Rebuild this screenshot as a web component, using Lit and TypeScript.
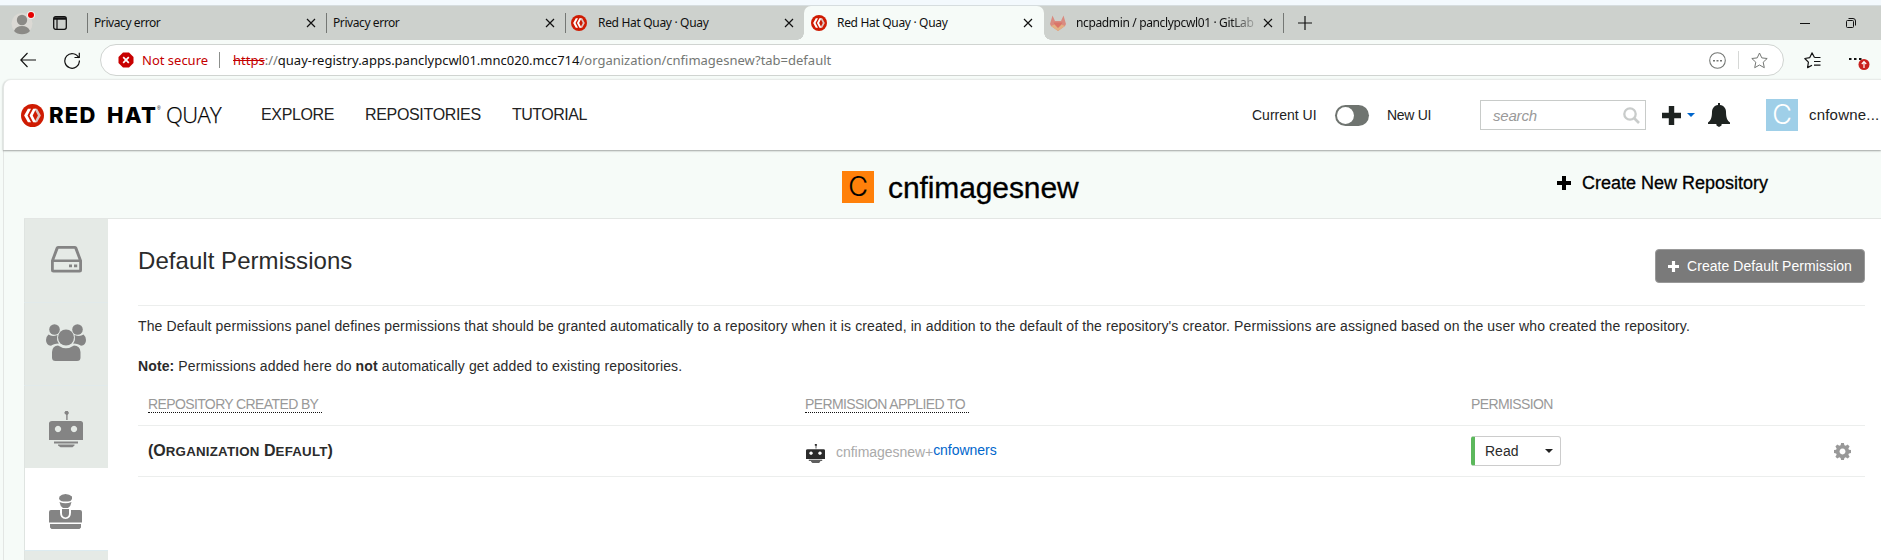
import { LitElement, html, css, svg } from "lit";
import { customElement } from "lit/decorators.js";

const quayMark = (size: number) => html`<svg width=${size} height=${size} viewBox="0 0 22 22">
  <circle cx="11" cy="11" r="11" fill="#cf1b02" />
  <path d="M12.800 4.500h2.600L19 11l-3.600 6.500h-2.600L16.200 11z" fill="#dcc4c0" />
  <path d="M6.600 4.500h3L6.200 11l3.400 6.500h-3L3 11z" fill="#fff" />
  <path d="M11.600 4.500h2.800L11.200 11l3.200 6.500h-2.800L8.200 11z" fill="#fff" />
</svg>`;

const cross = html`<svg width="10" height="10" viewBox="0 0 10 10"><path d="M1 1l8 8M9 1L1 9" stroke="#111" stroke-width="1.200" /></svg>`;

const plus = (size: number, color: string) => html`<svg width=${size} height=${size} viewBox="0 0 14 14">
  <path d="M5 0h4v5h5v4H9v5H5V9H0V5h5z" fill=${color} /></svg>`;

const robot = svg`<path d="M16.400 0h2.400l1.200 2-1.400 2v5h-1.400V4L15.200 2z"/>
  <path fill-rule="evenodd" d="M3 10h28.500q2.500 0 2.500 2.500V29H0V12.500Q0 10 3 10zM9 14.800a3.200 3.200 0 1 0 .01 0zM25 14.800a3.200 3.200 0 1 0 .01 0z"/>
  <path d="M5 30.500h24v2H5zM9 33.500h16.500v1l-2 1.800h-12l-2.500-1.800z"/>`;

@customElement("browser-chrome")
export class BrowserChrome extends LitElement {
  static styles = css`
    :host { display: block; font-family: "Noto Sans", sans-serif; }
    svg { display: block; flex: none; }
    .top { height: 5px; background: #f3f9fd; border-bottom: 1px solid #d6dddf; }
    .tabs { display: flex; height: 34px; background: #cdd1cd; color: #101010; font-size: 12px; }
    .lead { width: 87px; display: flex; align-items: center; box-sizing: border-box; padding-left: 11px; gap: 18px; }
    .tab { width: 239px; box-sizing: border-box; display: flex; align-items: center; padding: 0 10px 0 6px; position: relative; }
    .tab.sep::before { content: ""; position: absolute; left: 0; top: 7px; height: 20px; width: 1px; background: #747774; }
    .tab .name { flex: 1; white-space: nowrap; overflow: hidden; line-height: 34px; letter-spacing: -0.32px; padding-left: 11px; }
    .tab.bare .name { padding-left: 1px; letter-spacing: -0.42px; }
    .tab.active { width: 240px; padding-left: 7px; padding-right: 11px; background: #f6fbf8; border-radius: 7px 7px 0 0; }
    .tab.active .name { padding-left: 10px; }
    .tab.active::before, .tab.active::after { content: ""; position: absolute; bottom: 0; width: 7px; height: 7px; }
    .tab.active::before { left: -7px; background: radial-gradient(circle at 0 0, #cdd1cd 6.5px, #f6fbf8 7px); }
    .tab.active::after { right: -7px; background: radial-gradient(circle at 100% 0, #cdd1cd 6.5px, #f6fbf8 7px); }
    .tab .fade { letter-spacing: -0.36px; padding-left: 10px; -webkit-mask-image: linear-gradient(90deg, #000 86%, transparent 102%); margin-right: 6px; }
    .new { width: 44px; display: flex; align-items: center; justify-content: center; position: relative; }
    .new::before { content: ""; position: absolute; left: 0; top: 7px; height: 20px; width: 1px; background: #747774; }
    .win { margin-left: auto; display: flex; align-items: center; gap: 36px; padding-right: 25px; }
    .bar { height: 39px; display: flex; align-items: center; background: #f6fbf8; box-sizing: border-box; padding: 1px 0 0 20px; }
    .reload { margin-left: 28px; }
    .addr { margin-left: 20px; width: 1684px; height: 32px; box-sizing: border-box; border: 1px solid #d0d4d1; border-radius: 16px; background: #fff; display: flex; align-items: center; padding: 0 15px 0 17px; font-size: 13px; white-space: pre; }
    .ns { color: #c40000; margin-left: 8px; width: 77px; letter-spacing: 0; }
    .bad { color: #c40000; text-decoration: line-through; }
    .vr { width: 1px; height: 16px; background: #8c8f8c; margin-right: 13px; }
    .vr.pale { background: #d6d8d6; height: 18px; margin: 0 12px; }
    .dim { color: #747774; }
    .host { color: #111; }
    .tools { margin-left: auto; display: flex; align-items: center; }
    .fav { margin-left: 20px; }
    .more { margin-left: 28px; }
  `;
  render() {
    return html`
      <div class="top"></div>
      <div class="tabs">
        <div class="lead">
          <svg width="24" height="24" viewBox="0 0 24 24">
            <circle cx="11" cy="12.500" r="10.500" fill="#dbd9d4" />
            <circle cx="11" cy="9" r="5.200" fill="#8b8a86" />
            <path d="M3 20q2-5 8-5t8 5q-3 3.300-8 3.300T3 20z" fill="#8b8a86" />
            <circle cx="20" cy="4" r="4" fill="#f2f2f0" /><circle cx="20" cy="4" r="3" fill="#e60000" />
          </svg>
          <svg width="14" height="14" viewBox="0 0 14 14" fill="none" stroke="#111">
            <rect x=".7" y=".7" width="12.600" height="12.600" rx="2" stroke-width="1.300" />
            <path d="M1 2.500h12" stroke-width="2.500" /><path d="M4 3v10" stroke-width="1.200" />
          </svg>
        </div>
        <div class="tab bare sep"><span class="name">Privacy error</span>${cross}</div>
        <div class="tab bare sep"><span class="name">Privacy error</span>${cross}</div>
        <div class="tab sep">${quayMark(16)}<span class="name">Red Hat Quay · Quay</span>${cross}</div>
        <div class="tab active">${quayMark(16)}<span class="name">Red Hat Quay · Quay</span>${cross}</div>
        <div class="tab">
          <svg width="16" height="16" viewBox="0 0 16 16">
            <path d="M0 9L2.500.5 5 6h6L13.500.5 16 9l-1 2-7 5-7-5z" fill="#d98b80" />
            <path d="M3.500 7.500h9L8 15z" fill="#da7468" /><path d="M1 11l3.500-1.500L8 13l3.500-3.500L15 11l-7 5z" fill="#e3b083" />
          </svg>
          <span class="name fade">ncpadmin / panclypcwl01 · GitLab</span>${cross}
        </div>
        <div class="new"><svg width="14" height="14" viewBox="0 0 14 14"><path d="M7 0v14M0 7h14" stroke="#111" stroke-width="1.200" /></svg></div>
        <div class="win">
          <svg width="10" height="10" viewBox="0 0 10 10"><path d="M0 5.500h10" stroke="#111" /></svg>
          <svg width="10" height="10" viewBox="0 0 10 10" fill="none" stroke="#111"><rect x=".5" y="2.500" width="7" height="7" rx="1" /><path d="M2.500.5H7q2.500 0 2.500 2.500v4.500" /></svg>
        </div>
      </div>
      <div class="bar">
        <svg width="16" height="16" viewBox="0 0 16 16" fill="none" stroke="#111" stroke-width="1.100"><path d="M16 8H.8M7.500 1L.8 8l6.700 7" /></svg>
        <svg class="reload" width="16" height="17" viewBox="0 0 16 17" fill="none" stroke="#111" stroke-width="1.200"><path d="M14.800 6A7.300 7.300 0 1 0 15.400 8.500M15.300.7V5.500H10.500" /></svg>
        <div class="addr">
          <svg width="16" height="16" viewBox="0 0 16 16"><path d="M5 .5h6L15.500 5v6L11 15.500H5L.5 11V5z" fill="#c80000" /><path d="M5.200 5.200l5.600 5.600M10.800 5.200l-5.600 5.600" stroke="#fff" stroke-width="1.700" /></svg>
          <span class="ns">Not secure</span><span class="vr"></span><span class="bad">https</span><span class="dim">://</span><span class="host">quay-registry.apps.panclypcwl01.mnc020.mcc714</span><span class="dim">/organization/cnfimagesnew?tab=default</span>
          <span class="tools">
            <svg width="17" height="17" viewBox="0 0 17 17"><circle cx="8.500" cy="8.500" r="7.800" fill="none" stroke="#747774" stroke-width="1.100" /><path d="M4 8h2v1.500H4zM7.500 8h2v1.500h-2zM11 8h2v1.500h-2z" fill="#747774" /></svg>
            <span class="vr pale"></span>
            <svg width="17" height="17" viewBox="0 0 17 17"><path d="M8.500 1l2.300 4.900 5.400.6-4 3.700 1.100 5.500-4.800-2.700-4.800 2.700 1.100-5.500-4-3.700 5.400-.6z" fill="none" stroke="#747774" stroke-linejoin="round" /></svg>
          </span>
        </div>
        <svg class="fav" width="17" height="17" viewBox="0 0 17 17" fill="none" stroke="#111" stroke-width="1.200"><path d="M10.500 5.500L8 .9 5.800 5.600.8 6.500l3.600 3.700-.8 5.400L8 13.200M10.500 5.500h6M10 9.500h6.500M10 13.200h6.500" stroke-linejoin="round" /></svg>
        <svg class="more" width="22" height="20" viewBox="0 0 22 20"><path d="M0 8h2.500v2H0zM5 8h2.500v2H5zM10 8h2.500v2H10z" fill="#111" /><circle cx="15" cy="14.500" r="5.500" fill="#c9211e" /><path d="M15 18v-6M12.800 14l2.200-2.300L17.200 14" stroke="#fff" fill="none" stroke-width="1.200" /></svg>
      </div>`;
  }
}

@customElement("quay-header")
export class QuayHeader extends LitElement {
  static styles = css`
    :host { display: flex; height: 71px; box-sizing: border-box; background: #fff; border-top: 1px solid #e8ebe9; border-left: 1px solid #e3e6e4; border-radius: 8px 0 0 0; box-shadow: 0 1px 2px rgba(0, 0, 0, 0.35); position: relative; align-items: center; padding-left: 17px; color: #222; white-space: nowrap; }
    svg { display: block; flex: none; }
    .brand { display: flex; align-items: center; color: #000; width: 240px; }
    .rh { font: 800 22px/36px Inter, sans-serif; margin-left: 5px; width: 107px; letter-spacing: 1.3px; word-spacing: 4px; display: block; }
    .reg { font: 5px/1 "Liberation Sans", sans-serif; width: 9px; padding-left: 1px; padding-bottom: 13px; }
    .qy { font: 300 22px/36px "Open Sans", sans-serif; letter-spacing: -0.6px; padding-bottom: 3px; -webkit-text-stroke: 0.25px #000; }
    nav { display: flex; font-size: 16px; }
    .n1 { width: 104px; letter-spacing: -0.35px; } .n2 { width: 147px; letter-spacing: -0.33px; } .n3 { letter-spacing: -0.5px; }
    .right { margin-left: auto; display: flex; align-items: center; font-size: 14px; }
    .cur { width: 83px; }
    .toggle { width: 34px; height: 21px; border-radius: 11px; background: #6f7470; box-sizing: border-box; padding: 2px; margin-right: 18px; }
    .knob { width: 17px; height: 17px; border-radius: 9px; background: #fff; }
    .new { width: 93px; letter-spacing: -0.3px; }
    .search { width: 166px; height: 30px; box-sizing: border-box; border: 1px solid #c8cbc9; display: flex; align-items: center; justify-content: space-between; padding: 0 5px 0 12px; color: #999; font-style: italic; margin-right: 16px; font-size: 15px; letter-spacing: -0.2px; }
    .caret { margin-left: 6px; margin-right: 13px; }
    .ava { width: 32px; height: 32px; background: #9fcfe8; color: #fff; font: 300 27px/32px Inter, sans-serif; text-align: center; margin: 0 11px 0 36px; }
    .user { font-size: 15px; width: 72px; letter-spacing: 0.2px; padding-bottom: 2px; }
  `;
  render() {
    return html`
      <div class="brand">${quayMark(23)}<span class="rh">RED HAT</span><span class="reg">®</span><span class="qy">QUAY</span></div>
      <nav><span class="n1">EXPLORE</span><span class="n2">REPOSITORIES</span><span class="n3">TUTORIAL</span></nav>
      <div class="right">
        <span class="cur">Current UI</span><span class="toggle"><div class="knob"></div></span><span class="new">New UI</span>
        <div class="search">search<svg width="17" height="17" viewBox="0 0 17 17" fill="none" stroke="#c9cccb"><circle cx="7" cy="7" r="5.700" stroke-width="2.300" /><path d="M11 11l5 5" stroke-width="2.600" /></svg></div>
        ${plus(19, "#1e2321")}
        <svg class="caret" width="8" height="4" viewBox="0 0 8 4"><path d="M0 0h8L4 4z" fill="#06c" /></svg>
        <svg width="22" height="24" viewBox="0 0 22 24"><path d="M10 0h2v2c4 .6 6 3.500 6 7 0 6 1.500 9 4 10.500V21h-8.500a2.600 2.600 0 0 1-5 0H0v-1.500C2.500 18 4 15 4 9c0-3.500 2-6.400 6-7z" fill="#1e2321" /><path d="M8.500 21h5v1.500L11 24l-2.500-1.500z" fill="#1e2321" /></svg>
        <div class="ava">C</div><span class="user">cnfowne...</span>
      </div>`;
  }
}

@customElement("org-side-tabs")
export class OrgSideTabs extends LitElement {
  static styles = css`
    :host { display: block; width: 84px; flex: none; background: #e1eaeb; }
    .cell { height: 82px; margin-bottom: 1px; background: #e5eae6; display: flex; justify-content: center; border-left: 1px solid #dfe4e1; box-sizing: border-box; }
    .cell.first { height: 83px; }
    .cell.third { margin-bottom: 0; }
    .cell.on { background: #fff; border-bottom: 1px solid #dcebf0; height: 83px; margin-bottom: 0; }
    svg { display: block; fill: #848484; }
    .drive { margin-top: 27px; margin-right: 1px; } .team { margin-top: 21px; margin-right: 1px; } .bot { margin-top: 25px; margin-right: 1px; } .perm { margin-top: 26px; margin-right: 3px; }
  `;
  render() {
    return html`
      <div class="cell first"><svg class="drive" width="31" height="27" viewBox="0 0 31 27"><path fill-rule="evenodd" d="M7 0h17q1.700 0 2.200 1.600L31 14.500V24q0 2.500-2.500 2.500h-26Q0 26.500 0 24v-9.500L4.800 1.600Q5.300 0 7 0zM7.500 2.800L3.400 13.500h24.200L23.500 2.800zM2.800 16v7.700h25.400V16z" /><path d="M18 18.500h3v2.800h-3zM23 18.500h3.200v2.800H23z" /></svg></div>
      <div class="cell"><svg class="team" width="40" height="37" viewBox="0 0 40 37"><circle cx="8.500" cy="5.500" r="5.300"/><circle cx="31.500" cy="5.500" r="5.300"/><path d="M2.500 10.500q3.500 2.500 9 .5-1.500 5 1.500 8.500Q7 20 5 21.800 0 21 0 16q.5-4 2.500-5.500zM37.500 10.500q-3.500 2.500-9 .5 1.500 5-1.500 8.500 6 .5 8 2.300 5-.8 5-5.800-.5-4-2.500-5.500z"/><circle cx="20" cy="13.500" r="8"/><path d="M12 21.500q8 5.500 16 0Q34 21.500 34.500 28v5.500q0 3.500-3.500 3.500H9.500Q6 37 6 33.500V28q.5-6.500 6-6.500z"/></svg></div>
      <div class="cell third"><svg class="bot" width="34" height="37" viewBox="0 0 34 37">${robot}</svg></div>
      <div class="cell on"><svg class="perm" width="33" height="35" viewBox="0 0 33 35"><path d="M10.500 2.500Q12.500 0 16.500 0T23 2.500V5l-1.500 2q-5 1.200-9.500 0L10 5zM10.500 8q6 2.500 12 0-.5 4-3.500 6h-5q-3-2-3.500-6z"/><path d="M2 16h9v2.500q0 6.500 5.500 6.500T22 18.500V16h9q2 0 2 2v10.500H0V18q0-2 2-2z"/><path d="M13 15h7v4.500q0 3.500-3.500 4-3.500-.5-3.500-4zM1 30h31v3.500L30.500 35h-28L1 33.500z"/></svg></div>
      <div class="cell"></div>`;
  }
}

@customElement("default-permissions")
export class DefaultPermissions extends LitElement {
  static styles = css`
    :host { display: block; flex: 1; background: #fff; padding: 0 16px 0 30px; color: #2b2b2b; font-size: 14px; }
    svg { display: block; flex: none; }
    .head { display: flex; justify-content: space-between; align-items: flex-start; height: 86px; border-bottom: 1px solid #eceeed; }
    h2 { margin: 27px 0 0; font-size: 24px; line-height: 30px; font-weight: 400; letter-spacing: 0.05px; }
    .btn { margin-top: 30px; width: 210px; height: 34px; box-sizing: border-box; background: #7a7a7a; border: 1px solid #999; border-radius: 4px; color: #fff; display: flex; align-items: center; padding-left: 12px; gap: 8px; white-space: nowrap; letter-spacing: 0.06px; }
    p { margin: 10px 0 20px; line-height: 20px; white-space: nowrap; letter-spacing: 0.113px; }
    p.note { margin-bottom: 0; margin-top: 0; }
    .row { display: grid; grid-template-columns: 657px 666px 1fr 31px; padding-left: 10px; border-bottom: 1px solid #eceeed; }
    .hdr { height: 49px; color: #999; align-items: start; letter-spacing: -0.62px; }
    .hdr span { justify-self: start; margin-top: 20px; line-height: 17px; }
    .hdr .dot { border-bottom: 1px dotted #111; padding-right: 4px; height: 16px; }
    .body { height: 50px; align-items: center; }
    .org { font-weight: 700; font-size: 16px; padding-bottom: 1px; }
    .sc { font-size: 13.3px; text-transform: uppercase; letter-spacing: 0.22px; }
    .who { display: flex; align-items: center; color: #aaa; letter-spacing: -0.04px; }
    .who svg { margin: 5px 11px 0 1px; fill: #2b2b2b; }
    .who span { padding-top: 2px; }
    .who a { color: #06c; padding-bottom: 3px; }
    .sel { width: 90px; height: 30px; box-sizing: border-box; border: 1px solid #ccc; border-left: 4px solid #5cb85c; border-radius: 3px; display: flex; align-items: center; justify-content: space-between; padding: 0 7px 0 10px; }
  `;
  render() {
    return html`
      <div class="head"><h2>Default Permissions</h2><div class="btn">${plus(11, "#fff")}Create Default Permission</div></div>
      <p>The Default permissions panel defines permissions that should be granted automatically to a repository when it is created, in addition to the default of the repository's creator. Permissions are assigned based on the user who created the repository.</p>
      <p class="note"><b>Note:</b> Permissions added here do <b>not</b> automatically get added to existing repositories.</p>
      <div class="row hdr"><span class="dot">REPOSITORY CREATED BY</span><span class="dot">PERMISSION APPLIED TO</span><span>PERMISSION</span></div>
      <div class="row body">
        <div class="org">(O<span class="sc">rganization</span> D<span class="sc">efault</span>)</div>
        <div class="who"><svg width="19" height="19" viewBox="0 0 34 37" preserveAspectRatio="none">${robot}</svg><span>cnfimagesnew+</span><a>cnfowners</a></div>
        <div class="sel">Read<svg width="8" height="4" viewBox="0 0 8 4"><path d="M0 0h8L4 4z" fill="#222" /></svg></div>
        <svg width="17" height="17" viewBox="0 0 16 16"><path fill-rule="evenodd" fill="#999" d="M6.700 0h2.600l.5 2.100 1.200.5L12.900 1.400l1.800 1.800-1.200 1.900.5 1.200 2 .4v2.600l-2 .5-.5 1.200 1.200 1.900-1.800 1.800-1.900-1.200-1.200.5-.5 2H6.700l-.5-2-1.200-.5-1.900 1.200-1.800-1.800 1.200-1.900-.5-1.200L0 9.300V6.700l2-.4.5-1.200-1.200-1.900L3.100 1.400 5 2.600l1.200-.5zM8 5.200a2.800 2.800 0 1 0 .01 0z" /></svg>
      </div>`;
  }
}

@customElement("app-root")
export class AppRoot extends LitElement {
  static styles = css`
    :host { display: flex; flex-direction: column; height: 560px; overflow: hidden; background: #f6fbf8; font-family: "Liberation Sans", Arial, sans-serif; }
    .page { margin-left: 3px; flex: 1; display: flex; flex-direction: column; min-height: 0; }
    .rest { flex: 1; border-left: 1px solid #e3e6e4; padding-left: 20px; display: flex; flex-direction: column; min-height: 0; }
    .title { height: 68px; flex: none; display: grid; grid-template-columns: 818px 714px 1fr; align-items: start; color: #000; }
    .org { grid-column: 2; display: flex; padding-top: 21px; font-size: 30px; line-height: 34px; gap: 14px; letter-spacing: -0.1px; -webkit-text-stroke: 0.3px #000; }
    .ava { width: 32px; height: 32px; background: #ff800a; font: 300 27px/32px Inter, sans-serif; text-align: center; -webkit-text-stroke: 0.2px #000; }
    .create { display: flex; align-items: center; gap: 11px; font-size: 18px; padding-top: 21px; line-height: 24px; padding-left: 1px; -webkit-text-stroke: 0.3px #000; }
    .panel { flex: 1; display: flex; border-top: 1px solid #e3e6e4; min-height: 0; }
  `;
  render() {
    return html`
      <browser-chrome></browser-chrome>
      <div class="page">
        <quay-header></quay-header>
        <div class="rest">
          <div class="title">
            <div class="org"><div class="ava">C</div><span>cnfimagesnew</span></div>
            <div class="create">${plus(14, "#000")}<span>Create New Repository</span></div>
          </div>
          <div class="panel"><org-side-tabs></org-side-tabs><default-permissions></default-permissions></div>
        </div>
      </div>`;
  }
}
